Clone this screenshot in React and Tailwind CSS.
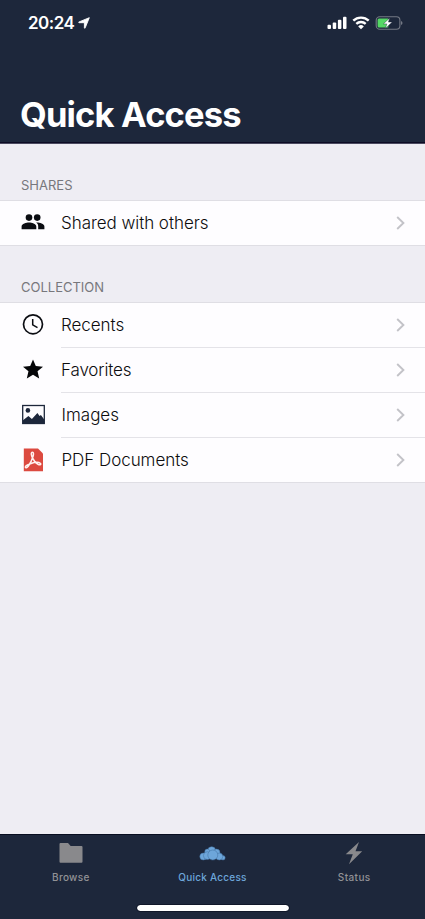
const PeopleIcon = () => (
  <svg className="h-[24px] w-[24px]" viewBox="0 0 24 24" fill="#0b0d12">
    <circle cx="8" cy="7.600" r="3.300" />
    <circle cx="16.200" cy="7.600" r="3.300" />
    <path d="M8 12.500c-2.600 0-7.400 1.200-7.400 3.900v2.800h14.700v-2.800C15.300 13.700 10.600 12.500 8 12.500z" />
    <path d="M16 12.500c-.3 0-.6 0-.9.1 1.300.8 2.100 2.100 2.100 3.800v2.800h6.200v-2.800C23.400 13.700 18.600 12.500 16 12.500z" />
  </svg>
);

const ClockIcon = () => (
  <svg className="h-[24px] w-[24px]" viewBox="0 0 24 24" fill="none" stroke="#0b0d12">
    <circle cx="12" cy="11.300" r="9.500" strokeWidth="1.700" />
    <path d="M11.700 5.900v6l4.800 2.700" strokeWidth="1.500" />
  </svg>
);

const StarIcon = () => (
  <svg className="h-[24px] w-[24px]" viewBox="0 0 24 24" fill="#050608">
    <path transform="translate(0 -0.6)" d="M12 17.270 18.180 21l-1.640-7.030L22 9.240l-7.190-.61L12 2 9.190 8.630 2 9.240l5.460 4.730L5.820 21z" />
  </svg>
);

const ImageIcon = () => (
  <svg className="h-[24px] w-[24px]" viewBox="0 0 24 24">
    <rect x="1.700" y="2.500" width="21.600" height="18" fill="none" stroke="#1d273b" strokeWidth="1.300" />
    <circle cx="6.900" cy="7.400" r="2.300" fill="#1d273b" />
    <path d="M2 20v-2.800l5.400-4.200 3.500 2.900 5.500-6 2.200 3 1.300-1 3.300 4.500V20z" fill="#1d273b" />
  </svg>
);

const PdfIcon = () => (
  <svg className="mt-[2px] h-[24px] w-[24px]" viewBox="0 0 24 24">
    <path d="M2.800.5h14.200L22 5.400v17.900H2.800z" fill="#dc4a40" />
    <path
      d="M11.500 4.300c-1.900 0-1.300 3 .1 5.900 1.200 2.500 3.200 5.100 5.400 6.200 2.200 1.100 3.500-.2 2.300-1.100-1.700-1.300-6.600-.7-9.900.5-3.100 1.100-5.100 2.300-5 3.300.1 1.100 1.600.9 3-1.100 1.900-2.700 3.800-6.700 4.700-9.700.600-2.200.600-4-.600-4z"
      fill="none"
      stroke="#fff2f0"
      strokeWidth="1.500"
      strokeLinejoin="round"
    />
  </svg>
);

const Chevron = () => (
  <svg className="mr-[20px] h-[14px] w-[9px]" viewBox="0 0 9 14" fill="none">
    <path d="M1.200 1l6.200 6-6.200 6" stroke="#c3c3c8" strokeWidth="1.900" />
  </svg>
);

function Row({ icon, label, textClass, last }) {
  return (
    <div className={`flex w-full pl-[21px] ${last ? "h-[44px]" : "h-[45px]"}`}>
      <div className="flex w-[40px] shrink-0 items-center pb-[2px]">{icon}</div>
      <div
        className={`flex flex-1 items-center justify-between ${last ? "" : "border-b border-[#e4e3e8]"}`}
      >
        <span className={`whitespace-nowrap text-[17px] leading-[22px] text-[#0c0c0e] ${textClass}`}>{label}</span>
        <Chevron />
      </div>
    </div>
  );
}

function Heading({ children, textClass }) {
  return (
    <h2 className={`pl-[21px] text-[13px] font-normal leading-[16px] text-[#77777c] ${textClass}`}>
      {children}
    </h2>
  );
}

function StatusBar() {
  return (
    <div className="flex h-[46px] items-center justify-between pl-[28px] pr-[22px] text-white">
      <div className="flex items-center gap-[4px]">
        <span className="text-[17px] font-semibold leading-[20px] tracking-[-0.5px]">20:24</span>
        <svg className="h-[12px] w-[12px]" viewBox="0 0 12 12" fill="white" stroke="white" strokeWidth=".9" strokeLinejoin="round">
          <path d="M11.300.7 7.200 10.800q-.5 1-.8 0V5.700H1.100q-1-.3 0-.8z" />
        </svg>
      </div>
      <div className="flex items-center">
        <svg className="h-[14px] w-[20px]" viewBox="0 0 20 14" fill="white">
          <rect x=".5" y="8.800" width="3.500" height="4.200" rx="1" />
          <rect x="5.700" y="6.600" width="3.500" height="6.400" rx="1" />
          <rect x="10.900" y="3.700" width="3.500" height="9.300" rx="1" />
          <rect x="16" y="0.700" width="3.500" height="12.300" rx="1" />
        </svg>
        <svg className="ml-[5px] h-[14px] w-[18px]" viewBox="0 0 18 14" fill="none" stroke="white">
          <path d="M1.300 4.700a11.100 11.100 0 0 1 15.400 0" strokeWidth="2.400" />
          <path d="M4.300 7.900a6.800 6.800 0 0 1 9.400 0" strokeWidth="2.300" />
          <path d="M9 13.200 6.200 10.400a4 4 0 0 1 5.600 0z" fill="white" stroke="none" />
        </svg>
        <svg className="ml-[5px] h-[14px] w-[28px]" viewBox="0 0 28 14">
          <rect x="1.200" y=".8" width="23.700" height="12.400" rx="3.500" fill="none" stroke="#747985" strokeWidth="1.100" />
          <path d="M4 2.500h9.300v9H4Q2.600 11.500 2.600 10V4Q2.600 2.500 4 2.500z" fill="#55d765" />
          <path d="M26 4.900q1.500.6 1.500 2.100T26 9.100z" fill="#747985" />
          <path d="M14.700 1.900 8.400 7.900h3.500l-1.500 4.500 6.800-6.300h-3.800z" fill="white" stroke="#1d273b" strokeWidth=".4" />
        </svg>
      </div>
    </div>
  );
}

const FolderIcon = () => (
  <svg className="h-[24px] w-[24px]" viewBox="0 0 24 24">
    <path d="M.5 3Q.5 2 1.500 2H9l2.700 3h10.800q1 0 1 1v14.800q0 1-1 1h-21q-1 0-1-1z" fill="#89898c" />
  </svg>
);

const CloudIcon = () => (
  <svg className="h-[24px] w-[28px]" viewBox="0 0 28 24" fill="#6da6da" stroke="#416f9f" strokeWidth=".5">
    <circle cx="12.700" cy="9.600" r="3.900" />
    <circle cx="8.300" cy="10.500" r="2.500" />
    <circle cx="17.500" cy="11.600" r="3.500" />
    <circle cx="4.300" cy="15.500" r="3.500" />
    <circle cx="8.300" cy="14.600" r="3.900" />
    <circle cx="24" cy="16.800" r="2.200" />
    <circle cx="20.300" cy="15.500" r="3.500" />
    <circle cx="13.800" cy="14" r="5" />
  </svg>
);

const BoltIcon = () => (
  <svg className="h-[24px] w-[24px]" viewBox="0 0 24 24">
    <path d="M17 1 3.700 13.300h7.100L7 23.200 20.200 10.300h-6.700z" fill="#89898c" />
  </svg>
);

function Tab({ icon, label, textClass }) {
  return (
    <div className="flex flex-1 flex-col items-center pt-[6px]">
      {icon}
      <span className={`mt-[5px] whitespace-nowrap text-[10px] font-medium leading-[14px] ${textClass}`}>{label}</span>
    </div>
  );
}

export default function App() {
  return (
    <div className="flex h-[919px] w-[425px] flex-col overflow-hidden bg-[#eeedf3] font-['Inter',sans-serif]">
      <header className="h-[144px] border-b border-[#4b4a60] bg-[#1d273b]">
        <div className="h-[143px] border-b border-[#0d0c24]">
          <StatusBar />
          <h1 className="mt-[48px] whitespace-nowrap pl-[20px] text-[34.5px] font-bold leading-[42px] tracking-[-0.85px] text-white">
            Quick Access
          </h1>
        </div>
      </header>
      <main className="flex-1 pt-[33px]">
        <Heading textClass="tracking-[0px]">SHARES</Heading>
        <div className="mt-[7px] border-y border-[#dfdee4] bg-[#fefdff]">
          <Row icon={<PeopleIcon />} label="Shared with others" textClass="font-light tracking-[-0.05px]" last />
        </div>
        <div className="pt-[33px]">
          <Heading textClass="tracking-[0px]">COLLECTION</Heading>
        </div>
        <div className="mt-[7px] border-y border-[#dfdee4] bg-[#fefdff]">
          <Row icon={<ClockIcon />} label="Recents" textClass="font-light tracking-[-0.05px]" />
          <Row icon={<StarIcon />} label="Favorites" textClass="font-light tracking-[-0.15px]" />
          <Row icon={<ImageIcon />} label="Images" textClass="font-light pl-[0.5px]" />
          <Row icon={<PdfIcon />} label="PDF Documents" textClass="font-light pl-[0.5px] tracking-[-0.05px]" last />
        </div>
      </main>
      <footer className="flex h-[85px] flex-col items-center border-t border-[#080e20] bg-[#1d273b]">
        <nav className="flex h-[70px] w-full">
          <Tab icon={<FolderIcon />} label="Browse" textClass="text-[#929296] tracking-[0.3px]" />
          <Tab icon={<CloudIcon />} label="Quick Access" textClass="text-[#6da6da] tracking-[0.25px]" />
          <Tab icon={<BoltIcon />} label="Status" textClass="text-[#929296] tracking-[0.4px]" />
        </nav>
        <div className="h-[6px] w-[152px] rounded-full bg-white outline outline-1 outline-[#101729]" />
      </footer>
    </div>
  );
}
